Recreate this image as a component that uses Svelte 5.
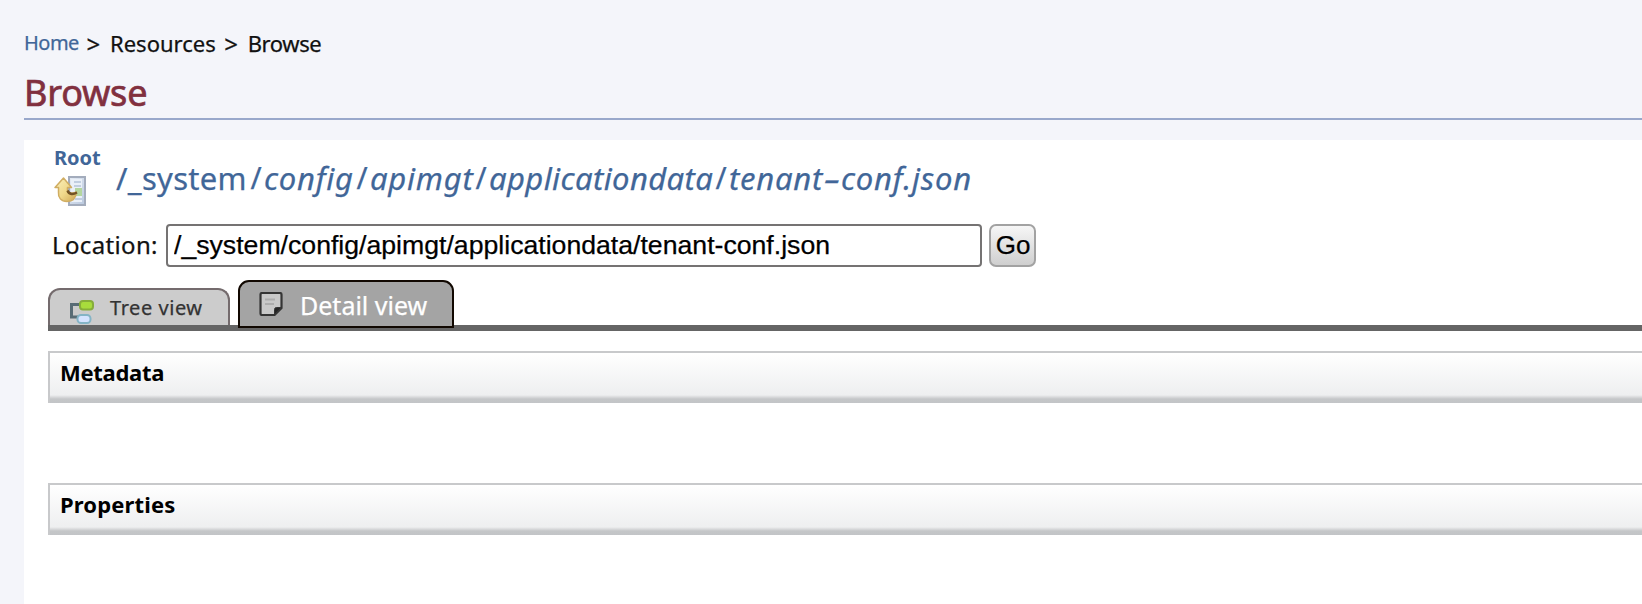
<script>
  const segments = ['config', 'apimgt', 'applicationdata'];
  const sections = ['Metadata', 'Properties'];
</script>

<main class="page">
  <nav class="crumbs"><a href="#home">Home</a><span class="sep">&gt;</span><span>Resources</span><span class="sep">&gt;</span><span class="current">Browse</span></nav>
  <h1>Browse</h1>
  <section class="panel">
    <div class="pathrow">
      <a class="root" href="#root">Root
        <svg width="33" height="31" viewBox="0 0 33 31">
          <defs>
            <linearGradient id="gold" x1="0" y1="0" x2="1" y2="1"><stop offset="0" stop-color="#faf0bc" /><stop offset=".55" stop-color="#f0d88a" /><stop offset="1" stop-color="#cda550" /></linearGradient>
            <linearGradient id="sheet" x1="0" y1="0" x2="1" y2="1"><stop offset="0" stop-color="#e6ecf5" /><stop offset="1" stop-color="#b9c8de" /></linearGradient>
          </defs>
          <rect x="15" y="1" width="16" height="28" fill="url(#sheet)" stroke="#a3acbc" stroke-width="2" />
          <rect x="17" y="3" width="11" height="23" fill="#eaf0f8" />
          <path d="M20 6h7M20 10h7M21 23h7" stroke="#b4c2d8" stroke-width="1.5" />
          <rect x="21" y="12" width="7" height="8" fill="#b4d69f" />
          <path d="M9.500 2 17.500 11.500h-4c-1 5 4 7 9 4.500-.5 6-4 9.500-9.500 9.500-6 0-9-4-8.500-9v-5H1Z" fill="url(#gold)" stroke="#d0ad62" stroke-width="1.500" stroke-linejoin="round" />
          <path d="M13.500 14.500c1.500 4.500 6 4 9.500 2" fill="none" stroke="#725325" stroke-width="2.400" />
        </svg>
      </a>
      <div class="path">
        <a class="system" href="#system">/_system</a>{#each segments as s}<span class="slash">/</span><a class="seg {s}" href="#{s}">{s}</a>{/each}<span class="slash">/</span><a class="seg" href="#file">tenant<span class="hyphen">-</span>conf.json</a>
      </div>
    </div>
    <div class="location"><label for="loc">Location:</label><input id="loc" value="/_system/config/apimgt/applicationdata/tenant-conf.json" /><button>Go</button></div>
    <div class="tabs">
      <div class="tab tree">
        <svg width="26" height="26" viewBox="0 0 26 26">
          <path d="M11 5.500H2.500V18H9" fill="none" stroke="#586c75" stroke-width="3" />
          <rect x="11" y="2" width="13" height="8.500" rx="3" fill="#a8dc3c" stroke="#86ad3a" stroke-width="2" />
          <rect x="8.500" y="16" width="13" height="8" rx="3.500" fill="#d5e3ff" stroke="#84b4c6" stroke-width="2" />
        </svg><span>Tree view</span>
      </div>
      <div class="tab detail">
        <svg width="24" height="24" viewBox="0 0 24 24">
          <path d="M3 1h18q1.500 0 1.500 1.500V16l-7 7H3q-1.500 0-1.500-1.500v-19Q1.500 1 3 1Z" fill="#c9c9c9" stroke="#353535" stroke-width="2.200" />
          <path d="M15.500 22.500v-5q0-2 2-2h5Z" fill="#252525" stroke="#353535" />
          <path d="M6 7.500h10M6 12h9" stroke="#adadad" stroke-width="2" />
        </svg><span>Detail view</span>
      </div>
    </div>
    {#each sections as s}<h2 class={s.toLowerCase()}>{s}</h2>{/each}
  </section>
</main>

<style>
  :global(body) { background: #f4f5fa; overflow: hidden; font-family: 'Noto Sans', sans-serif; }
  .page { height: 604px; box-sizing: border-box; padding: 30px 0 0 24px; overflow: hidden; display: flex; flex-direction: column; color: #111; -webkit-text-stroke: .25px currentColor; }
  a { color: #416698; text-decoration: none; }
  .crumbs { flex: none; display: flex; height: 26px; line-height: 26px; font-size: 22px; }
  .crumbs a { width: 54px; font-size: 20px; letter-spacing: -.5px; }
  .sep { width: 32px; padding: 1px 0 0 8.500px; box-sizing: border-box; font-size: 24px; }
  .current { letter-spacing: -.4px; }
  h1 { flex: none; margin: 16px 0 20px; height: 46px; line-height: 42px; border-bottom: 2px solid #99a8cb; color: #81303f; font-size: 36px; letter-spacing: -.2px; font-weight: 400; -webkit-text-stroke-width: .7px; }
  .panel { flex: 1; min-height: 0; background: #fff; padding: 7px 0 0 24px; }
  .pathrow { display: flex; height: 77px; padding-left: 6px; }
  .root { width: 62px; font-size: 20px; line-height: 22px; font-weight: 700; -webkit-text-stroke-width: 0; }
  .root svg { display: block; margin-top: 7px; }
  .path { display: flex; padding-top: 11px; font-size: 31px; line-height: 40px; color: #416698; white-space: nowrap; }
  .system { width: 132px; letter-spacing: .3px; }
  .slash { width: 16px; text-align: center; font-size: 30px; }
  .seg { font-style: italic; letter-spacing: .75px; }
  .config { width: 90px; }
  .apimgt { width: 103px; }
  .applicationdata { width: 224px; letter-spacing: .4px; }
  .hyphen { display: inline-block; width: 18px; text-align: center; letter-spacing: 0; transform: scaleX(1.7); }
  .location { display: flex; height: 43px; font-size: 24px; line-height: 42px; }
  label { width: 114px; padding-left: 4px; letter-spacing: .35px; }
  input, button { -webkit-text-stroke-width: .25px; }
  input { box-sizing: border-box; width: 816px; height: 43px; border: 2px solid #757373; border-radius: 4px; padding: 0 6px; font: 26.650px 'Liberation Sans', sans-serif; background: #fff; color: #000; }
  button { box-sizing: border-box; width: 47px; height: 43px; margin-left: 7px; padding: 0 0 0 1px; border: 2px solid #a2a2a2; border-radius: 7px; background: linear-gradient(#f6f6f6, #cfcfcf); font: 26px 'Liberation Sans', sans-serif; color: #000; }
  .tabs { display: flex; align-items: flex-end; gap: 8px; height: 64px; margin-bottom: 20px; box-sizing: border-box; padding-bottom: 3px; background: linear-gradient(#656565, #656565) bottom / 100% 6px no-repeat; }
  .tab { display: flex; box-sizing: border-box; white-space: nowrap; }
  .tree { width: 182px; height: 37px; margin-bottom: 3px; border: 2px solid #746b6d; border-bottom: 0; border-radius: 12px 12px 0 0; background: #ccc; color: #333; font-size: 20px; line-height: 36px; padding-left: 19px; letter-spacing: .55px; }
  .tree svg { margin: 9px 15px 0 0; }
  .detail { width: 216px; height: 48px; border: 2px solid #110801; border-radius: 11px 11px 0 0; background: #a4a4a4; color: #fff; font-size: 25px; line-height: 47px; padding-left: 19px; }
  .detail svg { margin: 10px 17px 0 0; }
  h2 { margin: 0 0 80px; box-sizing: border-box; height: 52px; border: 2px solid #c8c9cb; border-width: 2px 0 0 2px; padding-left: 10px; background: linear-gradient(#fff, #eeeff0 42px, #c4c6c8 46px, #c2c4c7); color: #000; font-size: 22px; line-height: 39px; -webkit-text-stroke-width: 0; }
  .metadata { letter-spacing: -.3px; }
  .properties { letter-spacing: .15px; }
</style>
